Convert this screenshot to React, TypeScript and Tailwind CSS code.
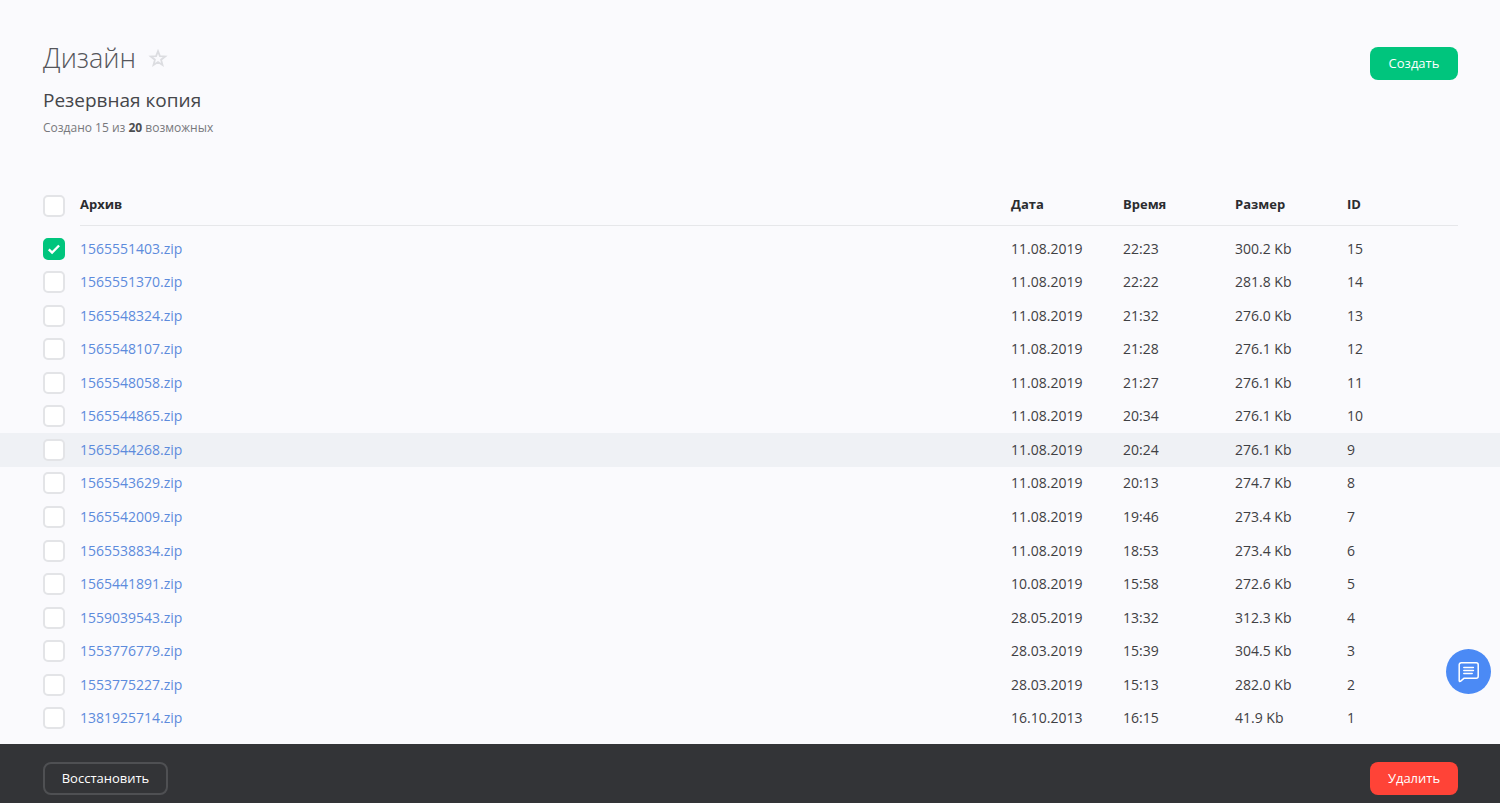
import { useState } from "react";

const backups = [
  { id: 15, file: "1565551403.zip", date: "11.08.2019", time: "22:23", size: "300.2 Kb" },
  { id: 14, file: "1565551370.zip", date: "11.08.2019", time: "22:22", size: "281.8 Kb" },
  { id: 13, file: "1565548324.zip", date: "11.08.2019", time: "21:32", size: "276.0 Kb" },
  { id: 12, file: "1565548107.zip", date: "11.08.2019", time: "21:28", size: "276.1 Kb" },
  { id: 11, file: "1565548058.zip", date: "11.08.2019", time: "21:27", size: "276.1 Kb" },
  { id: 10, file: "1565544865.zip", date: "11.08.2019", time: "20:34", size: "276.1 Kb" },
  { id: 9, file: "1565544268.zip", date: "11.08.2019", time: "20:24", size: "276.1 Kb" },
  { id: 8, file: "1565543629.zip", date: "11.08.2019", time: "20:13", size: "274.7 Kb" },
  { id: 7, file: "1565542009.zip", date: "11.08.2019", time: "19:46", size: "273.4 Kb" },
  { id: 6, file: "1565538834.zip", date: "11.08.2019", time: "18:53", size: "273.4 Kb" },
  { id: 5, file: "1565441891.zip", date: "10.08.2019", time: "15:58", size: "272.6 Kb" },
  { id: 4, file: "1559039543.zip", date: "28.05.2019", time: "13:32", size: "312.3 Kb" },
  { id: 3, file: "1553776779.zip", date: "28.03.2019", time: "15:39", size: "304.5 Kb" },
  { id: 2, file: "1553775227.zip", date: "28.03.2019", time: "15:13", size: "282.0 Kb" },
  { id: 1, file: "1381925714.zip", date: "16.10.2013", time: "16:15", size: "41.9 Kb" },
];

const headings = ["Архив", "Дата", "Время", "Размер", "ID"];

type CheckboxProps = {
  label: string;
  checked: boolean;
  onChange: () => void;
};

const Checkbox = ({ label, checked, onChange }: CheckboxProps) => (
  <label className="grid size-[22px] cursor-pointer">
    <input
      type="checkbox"
      aria-label={label}
      checked={checked}
      onChange={onChange}
      className="peer col-start-1 row-start-1 size-[22px] appearance-none rounded-[5px] border-2 border-[#e3e4e7] bg-white checked:border-[#00c57d] checked:bg-[#00c57d]"
    />
    <svg
      viewBox="0 0 22 22"
      className="pointer-events-none invisible col-start-1 row-start-1 size-[22px] peer-checked:visible"
      fill="none"
      stroke="#fff"
      strokeWidth="2.4"
    >
      <path d="M5.800 11.300l3.300 3.200 7-7" />
    </svg>
  </label>
);

const App = () => {
  const [selected, setSelected] = useState<number[]>([15]);
  const [active, setActive] = useState(9);

  const toggle = (id: number) =>
    setSelected(selected.includes(id) ? selected.filter((x) => x !== id) : [...selected, id]);

  const allSelected = selected.length === backups.length;

  return (
    <div className="flex min-h-screen flex-col bg-[#fafafd] font-['Open_Sans',sans-serif] text-sm text-[#3f4043]">
      <header className="flex items-start justify-between pt-10 pr-[42px] pl-[43px]">
        <div>
          <div className="flex items-center gap-3">
            <h1 className="text-[27px] leading-9 font-light text-[#55565b]">Дизайн</h1>
            <button aria-label="В избранное" className="cursor-pointer">
              <svg viewBox="0 0 20 20" className="size-5" fill="none" stroke="#dcdde1" strokeWidth="1.8">
                <path d="M10 3.200l1.900 4.900 5.300.3-4.100 3.300 1.400 5.200-4.500-2.900-4.500 2.900 1.400-5.200-4.100-3.300 5.300-.3z" />
              </svg>
            </button>
          </div>
          <h2 className="mt-2 text-[19px] leading-8 text-[#45464a]">Резервная копия</h2>
          <p className="mt-1 text-xs leading-4 text-[#77787c]">
            Создано 15 из <b className="text-[#4c4d50]">20</b> возможных
          </p>
        </div>
        <button className="mt-[7px] h-[33px] w-[88px] cursor-pointer rounded-lg bg-[#00c57d] text-[13px] text-white">
          Создать
        </button>
      </header>

      <main className="mt-[49px] mb-[9px] flex grow flex-col">
        <table className="w-full grow table-fixed border-collapse text-left">
          <colgroup>
            <col className="w-20" />
            <col />
            <col className="w-28" />
            <col className="w-28" />
            <col className="w-28" />
            <col className="w-[111px]" />
            <col className="w-[42px]" />
          </colgroup>
          <thead>
            <tr className="h-[47px]">
              <th className="p-0 pb-[6px] pl-[43px]">
                <Checkbox
                  label="Выбрать все"
                  checked={allSelected}
                  onChange={() => setSelected(allSelected ? [] : backups.map((b) => b.id))}
                />
              </th>
              {headings.map((title) => (
                <th key={title} className="p-0 pb-[6px] text-[13px] font-bold text-[#2b2c2f]">
                  <div className="h-[41px] border-b border-[#e6e7ea] leading-[38px]">{title}</div>
                </th>
              ))}
              <th className="p-0" />
            </tr>
          </thead>
          <tbody>
            {backups.map((b) => (
              <tr key={b.id} onMouseEnter={() => setActive(b.id)} className={b.id === active ? "bg-[#eff1f5]" : ""}>
                <td className="p-0 pl-[43px]">
                  <Checkbox label={b.file} checked={selected.includes(b.id)} onChange={() => toggle(b.id)} />
                </td>
                <td className="p-0">
                  <a href={`#${b.file}`} className="text-[#5d8bdc]">
                    {b.file}
                  </a>
                </td>
                <td className="p-0">{b.date}</td>
                <td className="p-0">{b.time}</td>
                <td className="p-0">{b.size}</td>
                <td className="p-0">{b.id}</td>
                <td className="p-0" />
              </tr>
            ))}
          </tbody>
        </table>
      </main>

      <footer className="sticky bottom-0 flex h-[59px] items-center justify-between bg-[#333437] pt-[10px] pr-[42px] pl-[43px] text-white">
        <button className="h-[33px] w-[125px] cursor-pointer rounded-lg border-2 border-[#4f5053] text-[13px]">
          Восстановить
        </button>
        <button className="h-[33px] w-[88px] cursor-pointer rounded-lg bg-[#ff4337] text-[13px]">Удалить</button>
      </footer>

      <button
        aria-label="Открыть чат"
        className="fixed right-[9px] bottom-[109px] flex size-[45px] cursor-pointer items-center justify-center rounded-full bg-[#4b8af5]"
      >
        <svg viewBox="0 0 22 22" className="size-[22px]" fill="none" stroke="#fff" strokeWidth="1.5" strokeLinecap="round" strokeLinejoin="round">
          <path d="M3.200 1.800h15a2 2 0 0 1 2 2v11.400a2 2 0 0 1-2 2H6.200L2.400 20.300a.7.7 0 0 1-1.200-.5V3.800a2 2 0 0 1 2-2z" />
          <path d="M5.800 6.500h9.600M5.800 9.500h9.600M5.800 12.500h8.400" />
        </svg>
      </button>
    </div>
  );
};

export default App;
